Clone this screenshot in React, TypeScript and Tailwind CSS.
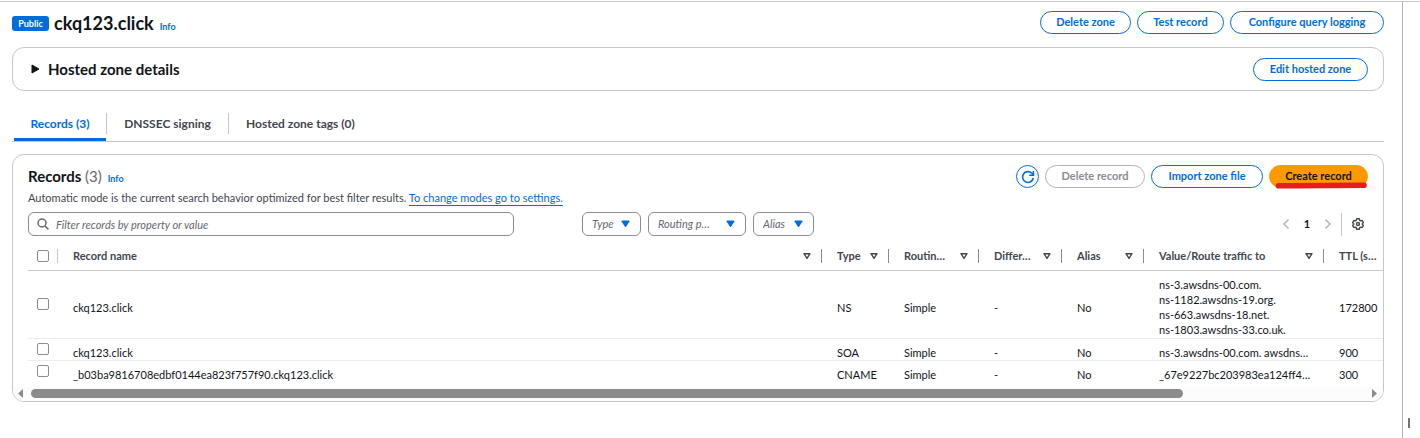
import type { ReactNode } from 'react';

type PillProps = { children: ReactNode; width: string; tone?: 'normal' | 'disabled' | 'primary' };

const tones = {
  normal: 'border-[#006ce0] text-[#006ce0] bg-white',
  disabled: 'border-[#b4b4bb] text-[#8c8c94] bg-white',
  primary: 'border-[#ff9900] text-[#0f141a] bg-[#ff9900]',
};

function Pill({ children, width, tone = 'normal' }: PillProps) {
  return (
    <button
      type="button"
      disabled={tone === 'disabled'}
      className={`flex h-[23px] shrink-0 items-center justify-center rounded-full border text-[11px] font-bold whitespace-nowrap ${width} ${tones[tone]}`}
    >
      {children}
    </button>
  );
}

function InfoLink() {
  return (
    <a href="#info" className="text-[9px] leading-3 font-bold text-[#006ce0]">
      Info
    </a>
  );
}

function FilterSelect({ label, text, width }: { label: string; text: string; width: string }) {
  return (
    <div className={`relative ${width}`}>
      <select
        aria-label={label}
        className="block h-6 w-full appearance-none rounded-md border border-[#8c8c94] bg-white pr-4 pl-[9px] text-[11px] text-[#656871] italic"
      >
        <option>{text}</option>
      </select>
      <svg className="pointer-events-none absolute top-2 right-[11px]" width="9" height="8" viewBox="0 0 9 8">
        <path d="M.8 1h7.4L4.5 6.8z" fill="#006ce0" stroke="#006ce0" strokeWidth="1" strokeLinejoin="round" />
      </svg>
    </div>
  );
}

function SortIcon() {
  return (
    <svg className="shrink-0" width="8" height="8" viewBox="0 0 8 8" aria-hidden="true">
      <path d="M1 1.7h6L4 6.3z" fill="none" stroke="#424650" strokeWidth="1.4" strokeLinejoin="round" />
    </svg>
  );
}

function Check({ label }: { label: string }) {
  return (
    <input
      type="checkbox"
      aria-label={label}
      className="ml-[9px] block h-3 w-3 appearance-none rounded-[2px] border-[1.5px] border-[#8c8c94] bg-white"
    />
  );
}

const columns = [
  { title: 'Record name', width: '' },
  { title: 'Type', width: 'w-[67px]' },
  { title: 'Routin…', width: 'w-[90px]' },
  { title: 'Differ…', width: 'w-[83px]' },
  { title: 'Alias', width: 'w-[82px]' },
  { title: 'Value/Route traffic to', width: 'w-[180px]' },
];

const records = [
  {
    name: 'ckq123.click',
    type: 'NS',
    values: ['ns-3.awsdns-00.com.', 'ns-1182.awsdns-19.org.', 'ns-663.awsdns-18.net.', 'ns-1803.awsdns-33.co.uk.'],
    ttl: '172800',
  },
  { name: 'ckq123.click', type: 'SOA', values: ['ns-3.awsdns-00.com. awsdns…'], ttl: '900' },
  {
    name: '_b03ba9816708edbf0144ea823f757f90.ckq123.click',
    type: 'CNAME',
    values: ['_67e9227bc203983ea124ff4…'],
    ttl: '300',
  },
];

function RecordsTable() {
  const cell = 'pt-[6px] pl-[15px]';
  return (
    <table className="w-full table-fixed border-collapse text-left text-[11px] leading-[15px] whitespace-nowrap">
      <thead className="text-[#424650]">
        <tr className="h-[34px] border-b border-[#c6c6cd]">
          <th className="w-[30px] p-0 pt-[6px]">
            <div className="flex h-[14px] items-center justify-between border-r border-[#c6c6cd]">
              <Check label="Select all records" />
            </div>
          </th>
          {columns.map((c) => (
            <th key={c.title} className={`p-0 pt-[6px] ${c.width}`}>
              <div className="flex h-[14px] items-center justify-between border-r border-[#8c8c94] pr-[10px] pl-[15px]">
                <span>{c.title}</span>
                <SortIcon />
              </div>
            </th>
          ))}
          <th className="w-[59px] p-0 pt-[6px] pl-[15px]">TTL (s…</th>
        </tr>
      </thead>
      <tbody className="text-[#0f141a]">
        {records.map((r) => (
          <tr key={r.type} className="border-b border-[#ebebf0] first:h-[68px] last:border-b-0">
            <td className="p-0">
              <Check label={`Select ${r.name} ${r.type}`} />
            </td>
            <td className={cell}>{r.name}</td>
            <td className={cell}>{r.type}</td>
            <td className={cell}>Simple</td>
            <td className={cell}>-</td>
            <td className={cell}>No</td>
            <td className={cell}>
              {r.values.map((v) => (
                <div key={v}>{v}</div>
              ))}
            </td>
            <td className={cell}>{r.ttl}</td>
          </tr>
        ))}
      </tbody>
    </table>
  );
}

export default function App() {
  return (
    <div className="flex min-h-screen flex-col bg-white pt-px font-['Lato','Open_Sans',sans-serif] text-[#0f141a]">
      <div className="flex grow border-t border-[#c6c6cd]">
        <main className="min-w-0 grow pr-[18px] pl-3">
          <header className="flex items-start pt-[9px]">
            <span className="mt-[5px] flex h-[15px] w-[37px] items-center justify-center rounded-[3px] bg-[#006ce0] text-[9px] font-bold text-white">
              Public
            </span>
            <div className="ml-[5px] flex items-baseline gap-[6px]">
              <h1 className="text-lg leading-6 font-bold">ckq123.click</h1>
              <InfoLink />
            </div>
            <div className="ml-auto flex gap-[6px]">
              <Pill width="w-[91px]">Delete zone</Pill>
              <Pill width="w-[87px]">Test record</Pill>
              <Pill width="w-[154px]">Configure query logging</Pill>
            </div>
          </header>

          <section className="mt-3 flex h-11 items-center justify-between rounded-xl border border-[#c6c6cd] px-[15px]">
            <button type="button" aria-expanded="false" className="flex items-center gap-2 pl-[3px]">
              <svg width="9" height="10" viewBox="0 0 9 10" aria-hidden="true">
                <path d="M1 1l7 4-7 4z" fill="#0f141a" stroke="#0f141a" strokeLinejoin="round" />
              </svg>
              <span className="text-[15px] leading-5 font-bold">Hosted zone details</span>
            </button>
            <Pill width="w-[115px]">Edit hosted zone</Pill>
          </section>

          <div role="tablist" className="mt-[22px] flex h-[29px] border-b border-[#c6c6cd] text-[12px] font-bold text-[#424650]">
            <button
              type="button"
              role="tab"
              aria-selected="true"
              className="ml-[2px] w-[92px] border-b-3 border-[#006ce0] pb-1 text-[#006ce0]"
            >
              Records (3)
            </button>
            <button type="button" role="tab" aria-selected="false" className="mb-[7px] w-[123px] border-x border-[#c6c6cd]">
              DNSSEC signing
            </button>
            <button type="button" role="tab" aria-selected="false" className="mb-[7px] pl-[17px]">
              Hosted zone tags (0)
            </button>
          </div>

          <section className="mt-3 overflow-hidden rounded-xl border border-[#c6c6cd] pt-[10px]">
            <div className="flex items-start px-[15px]">
              <div>
                <div className="flex h-[23px] items-baseline gap-[6px]">
                  <h2 className="text-[15px] leading-[23px] font-bold">
                    Records <span className="font-normal text-[#656871]">(3)</span>
                  </h2>
                  <InfoLink />
                </div>
                <p className="mt-[2px] text-[11px] leading-4 text-[#424650]">
                  Automatic mode is the current search behavior optimized for best filter results.{' '}
                  <a href="#settings" className="text-[#006ce0] underline underline-offset-3">
                    To change modes go to settings.
                  </a>
                </p>
              </div>
              <div className="ml-auto flex gap-[6px]">
                <button
                  type="button"
                  aria-label="Refresh"
                  className="flex h-[23px] w-[23px] items-center justify-center rounded-full border border-[#006ce0] text-[#006ce0]"
                >
                  <svg width="14" height="14" viewBox="0 0 14 14" fill="none" stroke="currentColor" strokeWidth="1.6">
                    <path d="M12.3 8A5.4 5.4 0 1 1 10.8 3.200L12.400 5" />
                    <path d="M12.4 1v4.200H8.200" />
                  </svg>
                </button>
                <Pill width="w-[100px]" tone="disabled">
                  Delete record
                </Pill>
                <Pill width="w-[112px]">Import zone file</Pill>
                <div className="relative">
                  <Pill width="w-[99px]" tone="primary">
                    Create record
                  </Pill>
                  <svg className="pointer-events-none absolute top-[17px] left-[6px]" width="93" height="7" viewBox="0 0 93 7">
                    <path d="M3.500 3.700H20L89 3.200" fill="none" stroke="#e71d1d" strokeWidth="5.6" strokeLinecap="round" />
                  </svg>
                </div>
              </div>
            </div>

            <div className="mt-[6px] flex items-center px-[15px]">
              <div className="relative w-[486px]">
                <svg
                  className="pointer-events-none absolute top-[6px] left-[9px]"
                  width="12"
                  height="12"
                  viewBox="0 0 12 12"
                  fill="none"
                  stroke="#656871"
                  strokeWidth="1.5"
                >
                  <circle cx="5" cy="5" r="4" />
                  <path d="M8 8l3.4 3.4" />
                </svg>
                <input
                  type="search"
                  aria-label="Filter records"
                  placeholder="Filter records by property or value"
                  className="block h-6 w-full rounded-md border border-[#8c8c94] pr-2 pl-[27px] text-[11px] placeholder:text-[#656871] placeholder:italic"
                />
              </div>
              <div className="ml-[68px] flex gap-[7px]">
                <FilterSelect label="Type" text="Type" width="w-[59px]" />
                <FilterSelect label="Routing policy" text="Routing p…" width="w-[98px]" />
                <FilterSelect label="Alias" text="Alias" width="w-[61px]" />
              </div>
              <div className="ml-auto flex items-center">
                <button type="button" aria-label="Previous page" className="text-[#b4b4bb]">
                  <svg width="8" height="12" viewBox="0 0 8 12" fill="none" stroke="currentColor" strokeWidth="1.5">
                    <path d="M6.5 1.5L2 6l4.5 4.5" />
                  </svg>
                </button>
                <button type="button" aria-current="page" className="w-[34px] text-center text-[11px] font-bold">
                  1
                </button>
                <button type="button" aria-label="Next page" className="text-[#b4b4bb]">
                  <svg width="8" height="12" viewBox="0 0 8 12" fill="none" stroke="currentColor" strokeWidth="1.5">
                    <path d="M1.5 1.5L6 6l-4.5 4.5" />
                  </svg>
                </button>
                <button
                  type="button"
                  aria-label="Preferences"
                  className="ml-[9px] flex h-[23px] w-[27px] items-center border-l border-[#c6c6cd] pl-[10px]"
                >
                  <svg width="12" height="12" viewBox="0 0 12 12" fill="none" stroke="#424650" strokeWidth="1.4">
                    <path
                      d="M4.7.8h2.6l.4 1.5 1 .6 1.5-.4 1.2 2.1L10.3 5.7v.7l1.1 1-1.2 2.1-1.5-.4-1 .6-.4 1.5H4.7l-.4-1.5-1-.6-1.5.4L.6 7.4l1.1-1v-.7L.6 4.6l1.2-2.1 1.5.4 1-.6z"
                      strokeLinejoin="round"
                    />
                    <circle cx="6" cy="6" r="1.5" />
                  </svg>
                </button>
              </div>
            </div>

            <div className="pl-[15px]">
              <RecordsTable />
            </div>

            <div className="mt-[5px] flex h-[14px] items-center bg-[#fcfcfc] pr-[6px] pl-[5px]">
              <svg width="5" height="9" viewBox="0 0 5 9" fill="#8b8b8b" aria-hidden="true">
                <path d="M5 0v9L0 4.5z" />
              </svg>
              <div className="mr-1 ml-2 grow">
                <div className="h-[9px] w-[86.2%] rounded-full bg-[#8b8b8b]" />
              </div>
              <svg width="5" height="9" viewBox="0 0 5 9" fill="#8b8b8b" aria-hidden="true">
                <path d="M0 0v9l5-4.5z" />
              </svg>
            </div>
          </section>
        </main>
        <aside className="flex w-[18px] shrink-0 flex-col justify-end border-l border-[#b4b4bb] pb-[10px] pl-[5px]">
          <div className="h-[10px] w-[2px] bg-[#72747e]" />
        </aside>
      </div>
    </div>
  );
}
